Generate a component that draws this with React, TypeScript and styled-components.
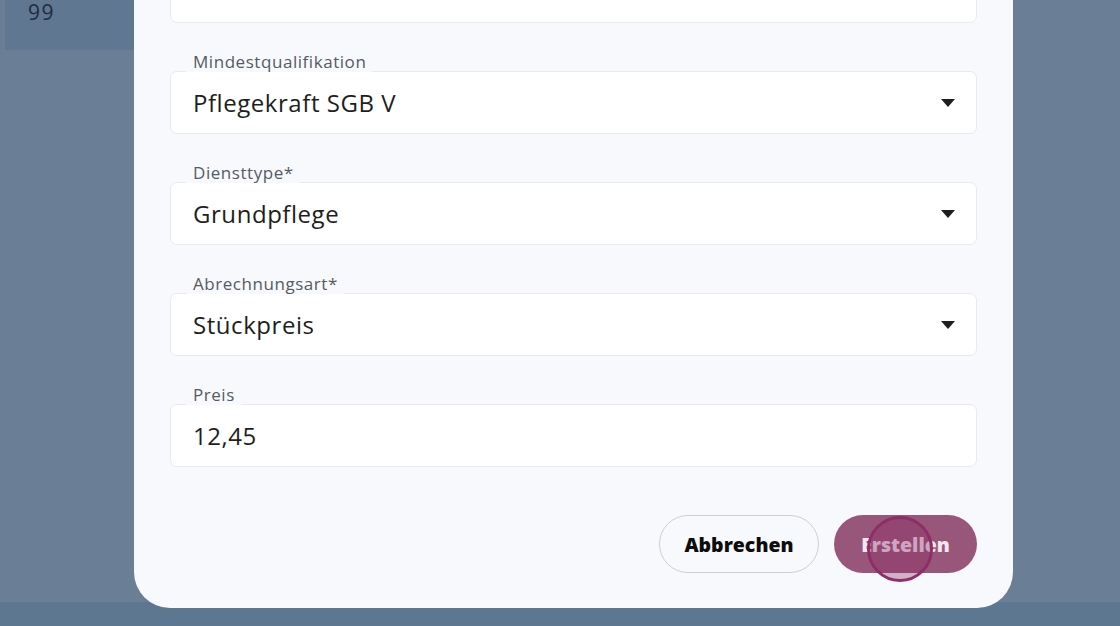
import React from "react";
import styled, { createGlobalStyle } from "styled-components";

const Global = createGlobalStyle`
  html, body { margin: 0; padding: 0; }
  body { font-family: "Open Sans", "Liberation Sans", sans-serif; overflow: hidden; }
`;

const Page = styled.div`
  position: relative;
  width: 1120px;
  height: 626px;
  overflow: hidden;
  background: #6a7e95;
  display: flex;
  flex-direction: column;
  justify-content: space-between;
`;

const TopCard = styled.div`
  margin-left: 5px;
  width: 129px;
  height: 50px;
  background: #5f7790;
  box-sizing: border-box;
  padding: 2px 0 0 23px;
  color: #1d2c3e;
  font-size: 21px;
  line-height: 20px;
  letter-spacing: 1.5px;
`;

const BottomBar = styled.div`
  height: 24px;
  background: #5e7791;
`;

const Modal = styled.div`
  position: absolute;
  left: 134px;
  width: 879px;
  top: -100px;
  bottom: 18px;
  background: #f8f9fd;
  border-radius: 36px;
  box-sizing: border-box;
  padding: 0 36px 35px;
  display: flex;
  flex-direction: column;
  justify-content: flex-end;
`;

const Field = styled.div`
  position: relative;
  margin-top: 48px;
`;

const Label = styled.span`
  position: absolute;
  left: 16px;
  top: -19px;
  padding: 0 6px 0 7px;
  height: 20px;
  line-height: 20px;
  background: #f8f9fd;
  color: #555b62;
  font-size: 17px;
  letter-spacing: 0.55px;
`;

const Box = styled.div`
  height: 63px;
  box-sizing: border-box;
  background: #fff;
  border: 1.5px solid #e9eaed;
  border-radius: 7px;
  display: flex;
  align-items: center;
  justify-content: space-between;
  padding: 0 21px 0 22px;
  color: #1e1e1e;
  font-size: 24px;
  letter-spacing: 0.55px;
`;

const Arrow = styled.span`
  width: 0;
  height: 0;
  border-left: 7px solid transparent;
  border-right: 7px solid transparent;
  border-top: 8px solid #1e1e1e;
`;

const Actions = styled.div`
  display: flex;
  justify-content: flex-end;
  gap: 15px;
  margin-top: 48px;
`;

const Button = styled.button<{ $primary?: boolean }>`
  position: relative;
  height: 58px;
  box-sizing: border-box;
  border-radius: 29px;
  padding: 0;
  width: ${(p) => (p.$primary ? "143px" : "160px")};
  border: ${(p) => (p.$primary ? "none" : "1.5px solid #cfcfd2")};
  background: ${(p) => (p.$primary ? "#98577a" : "transparent")};
  color: ${(p) => (p.$primary ? "#f3e6ee" : "#0d0d0d")};
  font-family: "Open Sans", "Liberation Sans", sans-serif;
  font-weight: 800;
  font-size: 19.5px;
  letter-spacing: 0px;
`;

const Ripple = styled.span`
  position: absolute;
  left: 33px;
  top: 1px;
  width: 66px;
  height: 66px;
  box-sizing: border-box;
  border-radius: 50%;
  border: 3px solid #8c2f68;
  background: rgba(140, 40, 100, 0.35);
`;

const fields = [
  { label: "", value: "", select: false },
  { label: "Mindestqualifikation", value: "Pflegekraft SGB V", select: true },
  { label: "Diensttype*", value: "Grundpflege", select: true },
  { label: "Abrechnungsart*", value: "Stückpreis", select: true },
  { label: "Preis", value: "12,45", select: false },
];

export default function App() {
  return (
    <Page>
      <Global />
      <TopCard>99</TopCard>
      <BottomBar />
      <Modal>
        {fields.map((f, i) => (
          <Field key={i}>
            {f.label && <Label>{f.label}</Label>}
            <Box>
              <span>{f.value}</span>
              {f.select && <Arrow />}
            </Box>
          </Field>
        ))}
        <Actions>
          <Button>Abbrechen</Button>
          <Button $primary>
            Erstellen
            <Ripple />
          </Button>
        </Actions>
      </Modal>
    </Page>
  );
}
